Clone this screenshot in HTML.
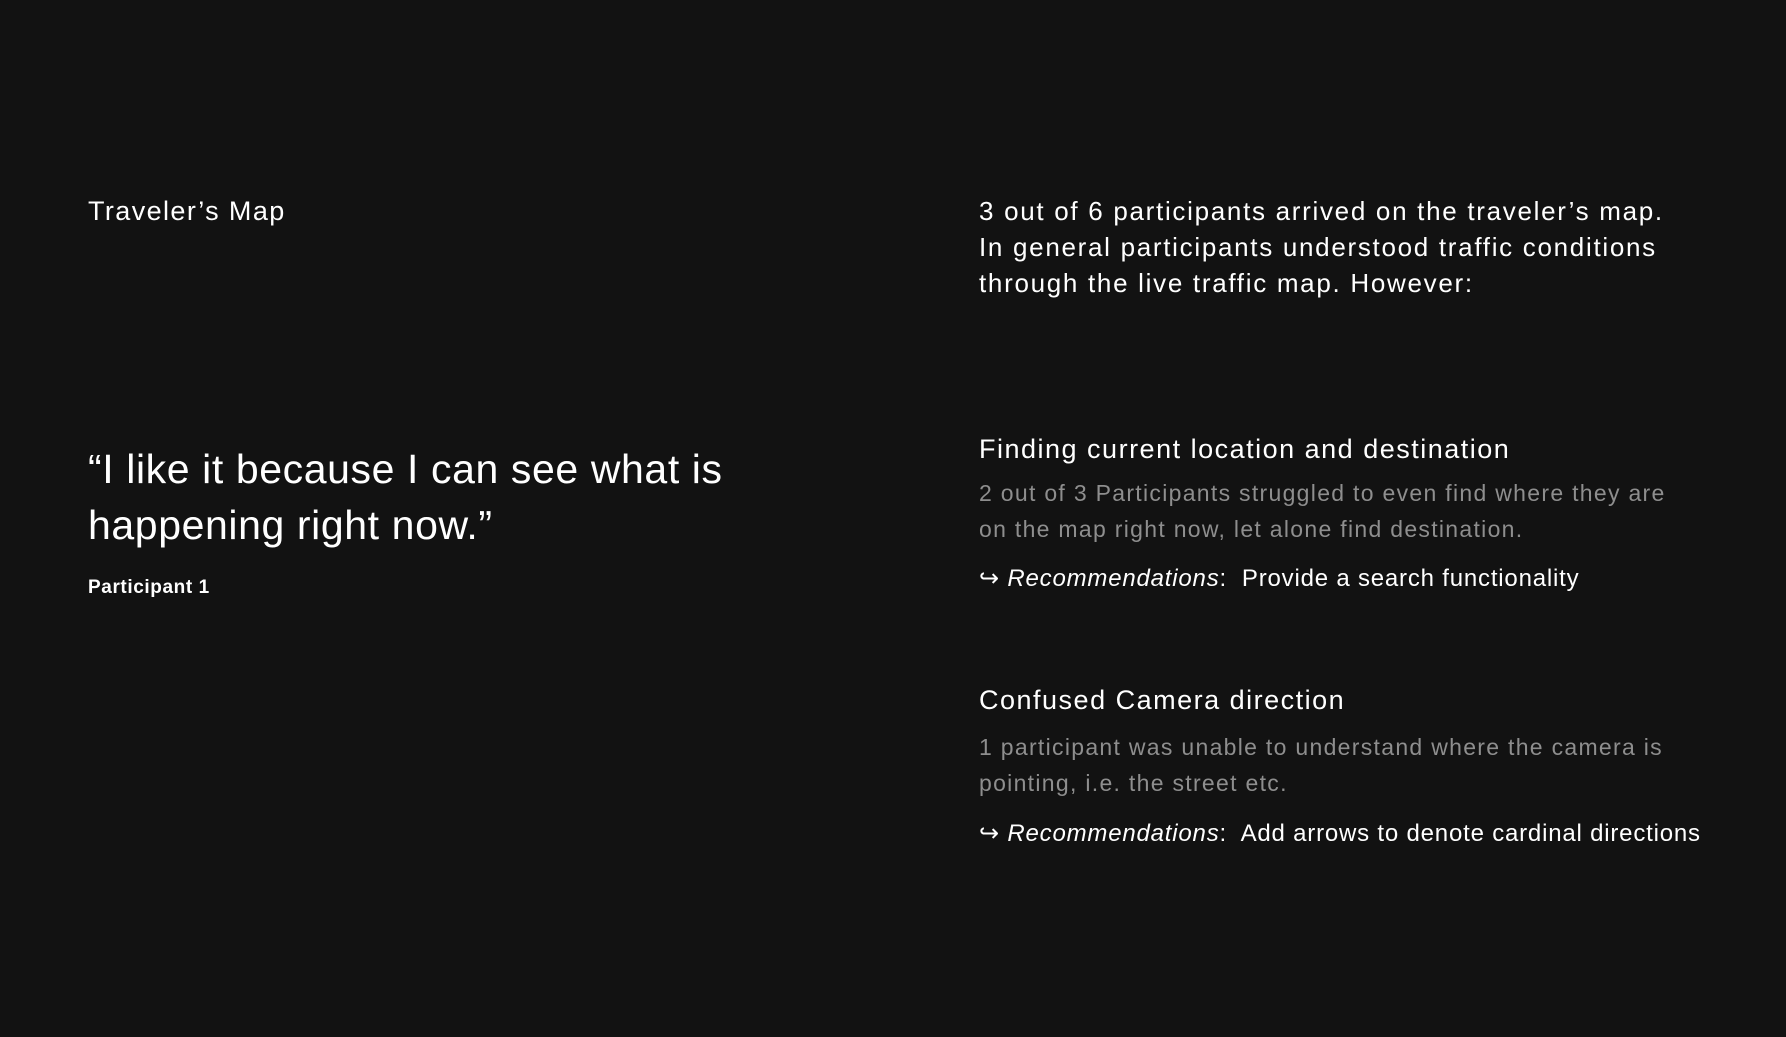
<!DOCTYPE html>
<html><head><meta charset="utf-8"><style>
html,body{margin:0;padding:0;background:#121212;}
body{width:1786px;height:1037px;position:relative;overflow:hidden;font-family:"Liberation Sans",sans-serif;color:#fff;}
.a{position:absolute;white-space:nowrap;}
.g{color:#8e8e8e;}
</style></head><body>
<div class="a" style="left:88px;top:193px;font-size:27px;line-height:36px;letter-spacing:1.4px;">Traveler’s Map</div>
<div class="a" style="left:979px;top:193px;font-size:26px;line-height:36px;letter-spacing:1.7px;">3 out of 6 participants arrived on the traveler’s map.<br>In general participants understood traffic conditions<br>through the live traffic map. However:</div>
<div class="a" style="left:88px;top:441px;font-size:41px;line-height:56px;letter-spacing:0.6px;">“I like it because I can see what is<br>happening right now.”</div>
<div class="a" style="left:88px;top:576px;font-size:19px;line-height:24px;font-weight:bold;letter-spacing:0.6px;">Participant 1</div>

<div class="a" style="left:979px;top:431px;font-size:27px;line-height:36px;letter-spacing:1.5px;">Finding current location and destination</div>
<div class="a g" style="left:979px;top:475px;font-size:23px;line-height:36px;letter-spacing:1.3px;">2 out of 3 Participants struggled to even find where they are<br>on the map right now, let alone find destination.</div>
<div class="a" style="left:979px;top:564px;font-size:24px;line-height:30px;letter-spacing:0.8px;">↪ <i>Recommendations</i>:&nbsp; Provide a search functionality</div>

<div class="a" style="left:979px;top:682px;font-size:27px;line-height:36px;letter-spacing:1.5px;">Confused Camera direction</div>
<div class="a g" style="left:979px;top:729px;font-size:23px;line-height:36px;letter-spacing:1.3px;">1 participant was unable to understand where the camera is<br>pointing, i.e. the street etc.</div>
<div class="a" style="left:979px;top:819px;font-size:24px;line-height:30px;letter-spacing:0.8px;">↪ <i>Recommendations</i>:&nbsp; Add arrows to denote cardinal directions</div>
</body></html>
